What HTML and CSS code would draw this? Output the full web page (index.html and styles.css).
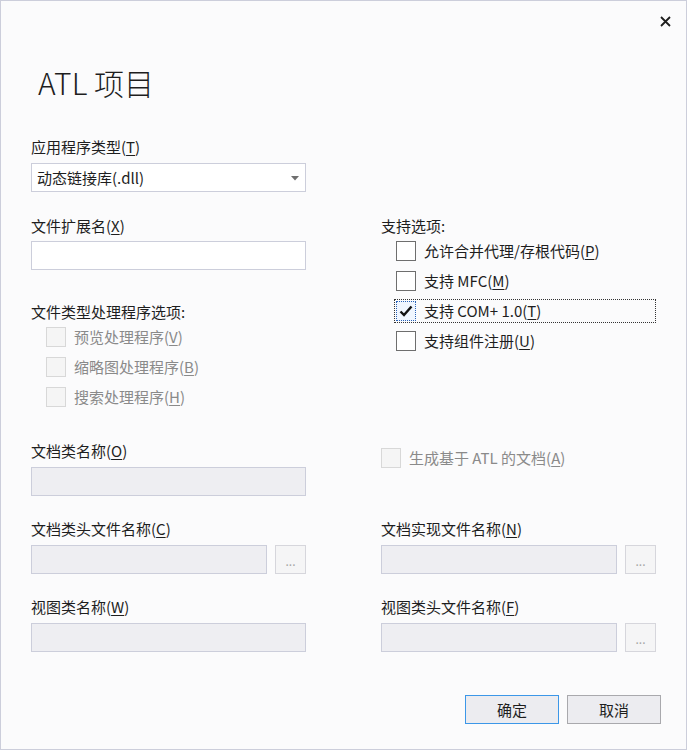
FILE: index.html
```html
<!DOCTYPE html>
<html lang="zh-CN">
<head>
<meta charset="utf-8">
<title>ATL 项目</title>
<link rel="stylesheet" href="styles.css">
</head>
<body>
<div class="dialog">
  <div class="titlebar">
    <span class="close" aria-label="关闭">
      <svg width="11" height="11" viewBox="0 0 11 11"><path d="M1 1 L10 10 M10 1 L1 10" stroke="#1e1e1e" stroke-width="1.8" fill="none"/></svg>
    </span>
  </div>
  <div class="content">
    <h1 class="title">ATL 项目</h1>

    <div class="label first">应用程序类型(<u>T</u>)</div>
    <div class="combo">
      <span>动态链接库(.dll)</span>
      <svg class="arrow" width="8" height="5" viewBox="0 0 8 5"><path d="M0 0 H8 L4 4.5 Z" fill="#6f6f6f"/></svg>
    </div>

    <div class="grid">
      <div class="cell">
        <div class="label">文件扩展名(<u>X</u>)</div>
        <div class="input"></div>
        <div class="label handlers">文件类型处理程序选项:</div>
        <div class="options sub">
          <div class="opt disabled"><span class="box"></span><span>预览处理程序(<u>V</u>)</span></div>
          <div class="opt disabled"><span class="box"></span><span>缩略图处理程序(<u>B</u>)</span></div>
          <div class="opt disabled"><span class="box"></span><span>搜索处理程序(<u>H</u>)</span></div>
        </div>
      </div>
      <div class="cell">
        <div class="label">支持选项:</div>
        <div class="options sub">
          <div class="opt"><span class="box"></span><span>允许合并代理/存根代码(<u>P</u>)</span></div>
          <div class="opt"><span class="box"></span><span>支持 MFC(<u>M</u>)</span></div>
          <div class="opt focused"><span class="box checked"><svg width="14" height="12" viewBox="0 0 14 12"><path d="M1.5 6.5 L5 10 L12.5 1.5" stroke="#111" stroke-width="2.4" fill="none"/></svg></span><span>支持 COM+ 1.0(<u>T</u>)</span></div>
          <div class="opt"><span class="box"></span><span>支持组件注册(<u>U</u>)</span></div>
        </div>
      </div>

      <div class="cell rowb">
        <div class="label">文档类名称(<u>O</u>)</div>
        <div class="input disabled"></div>
      </div>
      <div class="cell rowb-right">
        <div class="opt disabled"><span class="box"></span><span>生成基于 ATL 的文档(<u>A</u>)</span></div>
      </div>

      <div class="cell rowc">
        <div class="label">文档类头文件名称(<u>C</u>)</div>
        <div class="browse-row">
          <div class="input disabled grow"></div>
          <div class="dots">...</div>
        </div>
      </div>
      <div class="cell rowc">
        <div class="label">文档实现文件名称(<u>N</u>)</div>
        <div class="browse-row">
          <div class="input disabled grow"></div>
          <div class="dots">...</div>
        </div>
      </div>

      <div class="cell rowc">
        <div class="label">视图类名称(<u>W</u>)</div>
        <div class="input disabled"></div>
      </div>
      <div class="cell rowc">
        <div class="label">视图类头文件名称(<u>F</u>)</div>
        <div class="browse-row">
          <div class="input disabled grow"></div>
          <div class="dots">...</div>
        </div>
      </div>
    </div>

    <div class="buttons">
      <div class="btn default">确定</div>
      <div class="btn">取消</div>
    </div>
  </div>
</div>
</body>
</html>
```

FILE: styles.css
```css
html, body {
  margin: 0;
  padding: 0;
  background: #fbfbfc;
}

.dialog {
  width: 687px;
  height: 750px;
  box-sizing: border-box;
  border: 1px solid #cccedb;
  background: #fbfbfc;
  font-family: "Noto Sans CJK SC", "Noto Sans", sans-serif;
  font-size: 15px;
  color: #1e1e1e;
  display: flex;
  flex-direction: column;
}

.titlebar {
  height: 61px;
  display: flex;
  justify-content: flex-end;
  align-items: flex-start;
  padding: 15px 15px 0 0;
  box-sizing: border-box;
}

.close {
  display: flex;
  width: 11px;
  height: 11px;
}

.content {
  padding: 0 25px 0 30px;
  display: flex;
  flex-direction: column;
}

.title {
  margin: 0;
  font-size: 30px;
  font-weight: 300;
  line-height: 40px;
  height: 40px;
  padding-left: 7px;
  color: #1e1e1e;
}

.label {
  height: 20px;
  line-height: 20px;
  white-space: nowrap;
}

.label.first {
  margin-top: 35px;
}

u {
  text-decoration: underline;
  text-underline-offset: 2px;
}

.combo {
  margin-top: 6px;
  width: 275px;
  height: 29px;
  box-sizing: border-box;
  border: 1px solid #cccedb;
  background: #fff;
  display: flex;
  align-items: center;
  justify-content: space-between;
  padding: 0 5px 0 5px;
  line-height: 20px;
}

.combo .arrow {
  margin-right: 1px;
  margin-top: 1px;
}

.grid {
  display: grid;
  grid-template-columns: 275px 275px;
  column-gap: 75px;
  align-items: start;
}

.cell {
  display: flex;
  flex-direction: column;
}

.grid > .cell:nth-child(1),
.grid > .cell:nth-child(2) {
  margin-top: 24px;
}

.input {
  margin-top: 5px;
  height: 29px;
  box-sizing: border-box;
  border: 1px solid #cccedb;
  background: #fff;
}

.input.disabled {
  background: #eeeef2;
  border-color: #cccedb;
  margin-top: 6px;
}

.label.handlers {
  margin-top: 32px;
}

.options {
  display: flex;
  flex-direction: column;
  gap: 10px;
  margin-top: 5px;
}

.options.sub {
  padding-left: 15px;
}

.opt {
  display: flex;
  align-items: center;
  gap: 8px;
  height: 20px;
  line-height: 20px;
  white-space: nowrap;
}

.box {
  width: 20px;
  height: 20px;
  box-sizing: border-box;
  border: 1px solid #6e6e6e;
  background: #fff;
  flex: none;
  display: flex;
  align-items: center;
  justify-content: center;
}

.box.checked {
  border: 1px dotted #2a63b8;
  background: #f0f6ff;
}

.opt.focused {
  outline: 1px dotted #333;
  outline-offset: 1px;
  width: 258px;
}

.opt.disabled {
  color: #8a8a8a;
}

.opt.disabled .box {
  border-color: #d8d8d8;
  background: #f5f5f5;
}

.rowb {
  margin-top: 34px;
}

.rowb-right {
  margin-top: 41px;
}

.rowc {
  margin-top: 23px;
}

.browse-row {
  display: flex;
  gap: 8px;
  margin-top: 0;
}

.browse-row .grow {
  flex: 1;
}

.dots {
  margin-top: 6px;
  width: 31px;
  height: 29px;
  box-sizing: border-box;
  border: 1px solid #d6d6dc;
  background: #f5f5f6;
  color: #a6a6a6;
  font-size: 12px;
  line-height: 30px;
  text-align: center;
  letter-spacing: 0;
}

.buttons {
  margin-top: 43px;
  display: flex;
  justify-content: flex-end;
  gap: 8px;
}

.btn {
  width: 94px;
  height: 29px;
  box-sizing: border-box;
  border: 1px solid #a9a9ad;
  background: #ececf0;
  display: flex;
  align-items: center;
  justify-content: center;
  line-height: 20px;
}

.btn.default {
  border-color: #3c97e8;
}
```
